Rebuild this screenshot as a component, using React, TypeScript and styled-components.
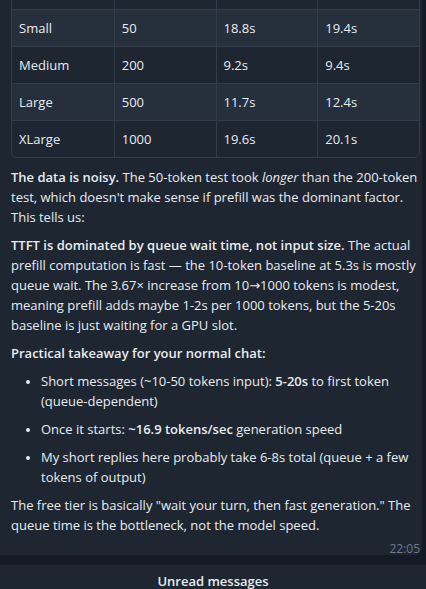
import styled, { createGlobalStyle } from "styled-components";

const GlobalStyle = createGlobalStyle`
  html, body {
    margin: 0;
    padding: 0;
    background: #141b24;
  }
  body {
    font-family: "Open Sans", "Noto Sans", "DejaVu Sans", sans-serif;
    color: #e8ecef;
    -webkit-font-smoothing: antialiased;
  }
  strong {
    font-weight: 600;
  }
`;

interface RowData {
  size: string;
  tokens: string;
  ttft: string;
  total: string;
}

const rows: RowData[] = [
  { size: "Test", tokens: "Input tokens", ttft: "TTFT", total: "Total" },
  { size: "Small", tokens: "50", ttft: "18.8s", total: "19.4s" },
  { size: "Medium", tokens: "200", ttft: "9.2s", total: "9.4s" },
  { size: "Large", tokens: "500", ttft: "11.7s", total: "12.4s" },
  { size: "XLarge", tokens: "1000", ttft: "19.6s", total: "20.1s" },
];

const Screen = styled.div`
  height: 589px;
  display: flex;
  flex-direction: column;
  overflow: hidden;
`;

// scrolled to the bottom: older content overflows off the top
const History = styled.div`
  flex: 1;
  min-height: 0;
  display: flex;
  flex-direction: column;
  justify-content: flex-end;
  padding-bottom: 10px;
`;

const Bubble = styled.div`
  width: 422px;
  box-sizing: border-box;
  background: #1e2632;
  border-radius: 0 0 8px 0;
  padding: 0 0 0 11px;
  font-size: 13px;
  line-height: 20px;
`;

const Table = styled.div`
  width: 407px;
  border: 1px solid #333d49;
  border-radius: 0 0 6px 6px;
  overflow: hidden;
  margin-bottom: 9px;
`;

const Row = styled.div<{ $shaded: boolean }>`
  display: grid;
  grid-template-columns: repeat(4, 1fr);
  height: 36px;
  background: ${({ $shaded }) => ($shaded ? "#262f3c" : "#1e2632")};
  & + & {
    border-top: 1px solid #333d49;
  }
`;

const Cell = styled.div<{ $head?: boolean }>`
  display: flex;
  align-items: center;
  padding-left: 7px;
  font-size: 13px;
  font-weight: ${({ $head }) => ($head ? 600 : 400)};
  & + & {
    border-left: 1px solid #333d49;
  }
`;

const Para = styled.p`
  margin: 0 0 8px;
`;

const List = styled.ul`
  margin: 0 0 8px;
  padding-left: 30px;
  li {
    margin-bottom: 8px;
  }
  li::marker {
    font-size: 11px;
  }
`;

const Meta = styled.div`
  display: flex;
  justify-content: flex-end;
  padding-right: 2px;
  font-size: 12px;
  line-height: 12px;
  color: #6d7b8a;
  margin-top: 1px;
`;

const UnreadBar = styled.div`
  height: 24px;
  background: #1e2632;
  display: flex;
  justify-content: center;
  align-items: flex-end;
  font-size: 13px;
  font-weight: 600;
  line-height: 16px;
  color: #e8ecef;
`;

export default function App() {
  return (
    <>
      <GlobalStyle />
      <Screen>
        <History>
          <Bubble>
            <Table>
              {rows.map((r, i) => (
                <Row key={r.size} $shaded={i % 2 === 1}>
                  <Cell $head={i === 0}>{r.size}</Cell>
                  <Cell $head={i === 0}>{r.tokens}</Cell>
                  <Cell $head={i === 0}>{r.ttft}</Cell>
                  <Cell $head={i === 0}>{r.total}</Cell>
                </Row>
              ))}
            </Table>
            <Para>
              <strong>The data is noisy.</strong> The 50-token test took{" "}
              <em>longer</em> than the 200-token test, which doesn't make sense
              if prefill was the dominant factor. This tells us:
            </Para>
            <Para>
              <strong>
                TTFT is dominated by queue wait time, not input size.
              </strong>{" "}
              The actual prefill computation is fast — the 10-token baseline at
              5.3s is mostly queue wait. The 3.67× increase from 10→1000 tokens
              is modest, meaning prefill adds maybe 1-2s per 1000 tokens, but
              the 5-20s baseline is just waiting for a GPU slot.
            </Para>
            <Para>
              <strong>Practical takeaway for your normal chat:</strong>
            </Para>
            <List>
              <li>
                Short messages (~10-50 tokens input): <strong>5-20s</strong> to
                first token (queue-dependent)
              </li>
              <li>
                Once it starts: <strong>~16.9 tokens/sec</strong> generation
                speed
              </li>
              <li>
                My short replies here probably take 6-8s total (queue + a few
                tokens of output)
              </li>
            </List>
            <Para>
              The free tier is basically "wait your turn, then fast
              generation." The queue time is the bottleneck, not the model
              speed.
            </Para>
            <Meta>22:05</Meta>
          </Bubble>
        </History>
        <UnreadBar>Unread messages</UnreadBar>
      </Screen>
    </>
  );
}
